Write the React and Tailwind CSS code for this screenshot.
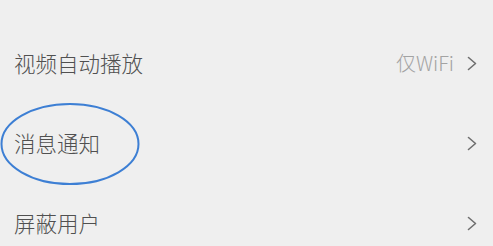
import React from "react";

function Chevron() {
  return (
    <svg width="12" height="15" viewBox="0 0 12 15" className="shrink-0">
      <polyline points="2.5,1.5 9.5,7.5 2.5,13.5" fill="none" stroke="#6f6f6f" strokeWidth="1.6" strokeLinecap="round" strokeLinejoin="round" />
    </svg>
  );
}

function Row({ label, value }) {
  return (
    <div className="flex h-[80px] items-center justify-between pl-[14px] pr-[15px]">
      <span className="text-[21.5px] font-light leading-none text-[#505050]">{label}</span>
      <div className="flex items-center gap-[12px]">
        {value && <span className="text-[20px] font-light leading-none text-[#a3a3a3]">{value}</span>}
        <Chevron />
      </div>
    </div>
  );
}

export default function App() {
  return (
    <div
      className="relative h-[246px] w-[493px] overflow-hidden bg-[#efefef] pt-[23px]"
      style={{ fontFamily: '"Noto Sans CJK SC", "Noto Sans", sans-serif' }}
    >
      <Row label="视频自动播放" value="仅WiFi" />
      <Row label="消息通知" />
      <Row label="屏蔽用户" />
      <svg className="pointer-events-none absolute left-0 top-[102px]" width="142" height="84" viewBox="0 0 142 84">
        <ellipse cx="70" cy="42" rx="68.5" ry="40" fill="none" stroke="#3d7fd4" strokeWidth="2" />
      </svg>
    </div>
  );
}
